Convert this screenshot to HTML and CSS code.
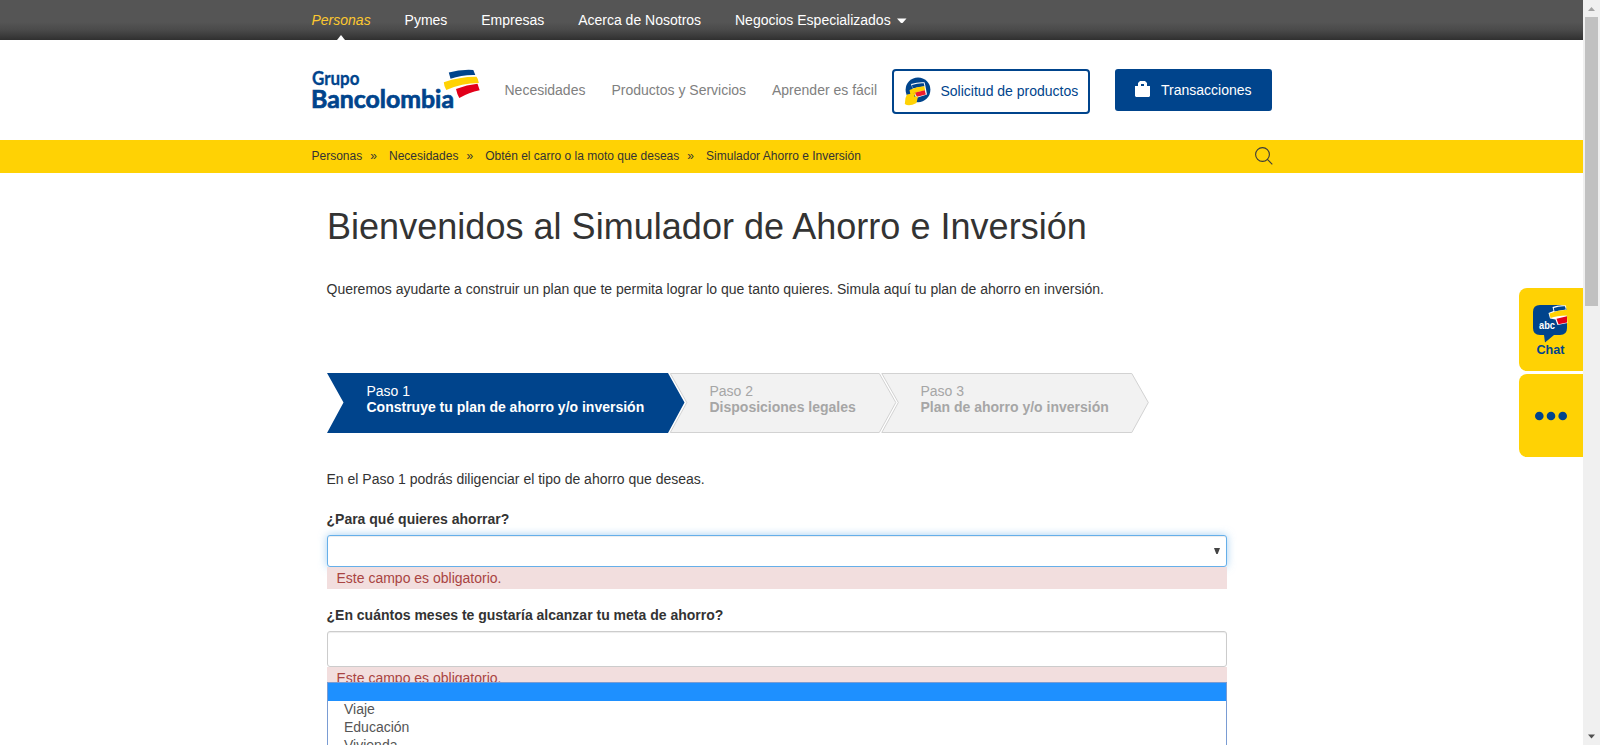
FILE: index.html
```html
<!DOCTYPE html>
<html lang="es">
<head>
<meta charset="utf-8">
<title>Simulador Ahorro e Inversión</title>
<link rel="stylesheet" href="styles.css">
</head>
<body>
<div class="viewport">
<div class="page">
  <nav class="topbar">
    <a class="current">Personas</a><a>Pymes</a><a>Empresas</a><a>Acerca de Nosotros</a><a>Negocios Especializados<svg class="caret" width="10" height="6" viewBox="0 0 10 6"><path d="M0 0.5H9.5L5.8 4.7Q4.8 5.5 3.8 4.7Z" fill="#fff"/></svg></a>
  </nav>
  <header class="header">
    <svg class="logo" width="168" height="48" viewBox="0 0 168 48">
      <text x="0" y="15.500" class="logo-small" textLength="47.500" lengthAdjust="spacingAndGlyphs">Grupo</text>
      <text x="-1" y="39" class="logo-big" textLength="143" lengthAdjust="spacingAndGlyphs">Bancolombia</text>
      <path d="M136.800 3.500Q148 .3 161.300 1L163.300 6Q150 5.600 138.500 9.800Z" fill="#00448c"/>
      <path d="M131.800 13.200Q148 7.500 164.500 7.700Q166.500 10 166.800 14Q150 14 134.300 21Q132 17.500 131.800 13.200Z" fill="#ffd204"/>
      <path d="M144 20Q155 15.800 165.500 14.800L167.700 21.300Q157 23.500 147.300 29Q145 25 144 20Z" fill="#e2001a"/>
    </svg>
    <a class="link necesidades">Necesidades</a>
    <a class="link productos">Productos y Servicios</a>
    <a class="link aprender">Aprender es fácil</a>
    <a class="request">
      <svg width="27" height="29" viewBox="0 0 27 29"><circle cx="14" cy="12.800" r="12.400" fill="#00448c"/><path d="M7 7Q14 4.800 20.500 5.300L21.300 8.500L23 17.500L12 21Z" fill="#fff"/><path d="M8 7.900Q14 5.900 19.800 6.300L20.500 9.200L8.500 11.500Z" fill="#00448c"/><path d="M5.500 13Q13 9.500 20.300 9.200L21.200 13.500Q12 14.500 6.500 18Z" fill="#ffd204"/><path d="M10.500 15.800L20.800 13.200L21.800 17.400L13 19.800Z" fill="#ed1c2e"/><path d="M3 17.500L12 15.800L10 19.500L14 19.500L12.500 26Q5 30 .8 27L1.500 21Z" fill="#ffd204"/></svg>
      <span>Solicitud de productos</span>
    </a>
    <a class="transactions">
      <svg width="15" height="16" viewBox="0 0 15 16"><path d="M0 5H3V2L5 0H10L12 2V5H15V15L14 16H1L0 15Z" fill="#fff"/><path d="M6 3H9V5H6Z" fill="#00448c"/></svg>
      <span>Transacciones</span>
    </a>
  </header>
  <div class="crumbs">
    <a>Personas</a><i>»</i><a>Necesidades</a><i>»</i><a>Obtén el carro o la moto que deseas</a><i>»</i><a>Simulador Ahorro e Inversión</a>
    <svg class="search" width="18" height="18" viewBox="0 0 18 18" fill="none" stroke="#3b3b3b" stroke-width="1.100"><circle cx="7.500" cy="7.500" r="6.900"/><path d="M12.400 12.400L17.300 17.300"/></svg>
  </div>
  <main class="main">
    <h1>Bienvenidos al Simulador de Ahorro e Inversión</h1>
    <p class="intro">Queremos ayudarte a construir un plan que te permita lograr lo que tanto quieres. Simula aquí tu plan de ahorro en inversión.</p>
    <div class="steps">
      <div class="step step-one"><svg class="shape" width="358" height="60"><path d="M0 0H341L357.500 29.500L341 60H0L16.500 29.500Z" fill="#00448c"/></svg><span>Paso 1</span><b>Construye tu plan de ahorro y/o inversión</b></div>
      <div class="step step-two"><svg class="shape" width="228" height="60"><path d="M.3 .5H209.300L225.800 29.500L209.300 59.500H.3L16.800 29.500Z" fill="#f2f2f2" stroke="#d2d2d2"/></svg><span>Paso 2</span><b>Disposiciones legales</b></div>
      <div class="step step-three"><svg class="shape" width="269" height="60"><path d="M.8 .5H250.800L267.300 29.500L250.800 59.500H.8L17.300 29.500Z" fill="#f2f2f2" stroke="#d2d2d2"/></svg><span>Paso 3</span><b>Plan de ahorro y/o inversión</b></div>
    </div>
    <p class="note">En el Paso 1 podrás diligenciar el tipo de ahorro que deseas.</p>
    <div class="label">¿Para qué quieres ahorrar?</div>
    <div class="field select"><svg width="6" height="6" viewBox="0 0 6 6"><path d="M0 0H6L3.700 6H2.300Z" fill="#444"/></svg></div>
    <div class="error">Este campo es obligatorio.</div>
    <div class="label second">¿En cuántos meses te gustaría alcanzar tu meta de ahorro?</div>
    <div class="field input"></div>
    <div class="error lower">Este campo es obligatorio.</div>
    <div class="options"><div class="option active"></div><div class="option">Viaje</div><div class="option">Educación</div><div class="option">Vivienda</div></div>
  </main>
  <aside class="side">
    <div class="tab">
      <svg width="64" height="83" viewBox="0 0 64 83">
        <path d="M21 17H41Q48 17 48 24V40Q48 47 41 47H35L26 54.500L25 47H21Q14 47 14 40V24Q14 17 21 17Z" fill="#00448c"/>
        <path d="M33.500 19Q40 16.500 47 17.500L48.500 35L38.500 37L36.500 31.500L31 30.500L29.500 25L34.500 23Z" fill="#fff"/>
        <path d="M34.800 20Q40 18 46 18.300L46.800 21.500L35.500 23.500Z" fill="#00448c"/>
        <path d="M30.500 25.500Q39 22 48 21.700V27.500Q38 27.500 31.500 30Z" fill="#ffd204"/>
        <path d="M37.500 30.700L48 28.300V34.500L39.500 36.300Z" fill="#e2001a"/>
        <text class="abc" x="20" y="41" textLength="16" lengthAdjust="spacingAndGlyphs">abc</text>
        <text class="chat" x="17.500" y="66" textLength="28" lengthAdjust="spacingAndGlyphs">Chat</text>
      </svg>
    </div>
    <div class="tab"><svg width="64" height="83" viewBox="0 0 64 83" fill="#00448c"><circle cx="20.300" cy="42" r="4.300"/><circle cx="32" cy="42" r="4.300"/><circle cx="43.700" cy="42" r="4.300"/></svg></div>
  </aside>
</div>
<div class="scrollbar">
  <svg width="17" height="17" viewBox="0 0 17 17"><path d="M5 11L8.500 7L12 11Z" fill="#a3a3a3"/></svg>
  <div class="thumb"></div>
  <svg class="down" width="17" height="17" viewBox="0 0 17 17"><path d="M5 6.500H12L8.500 10.500Z" fill="#505050"/></svg>
</div>
</div>
</body>
</html>
```
FILE: styles.css
```css
* { box-sizing: border-box; }
body { margin: 0; font: 14px/20px "Liberation Sans", Arial, sans-serif; color: #333; background: #fff; }
.viewport { display: flex; width: 1600px; height: 745px; overflow: hidden; }
.page { position: relative; width: 1583px; height: 745px; overflow: hidden; }
svg { display: block; flex: none; overflow: visible; }
.topbar { display: flex; gap: 33.900px; height: 40px; padding-left: 311.500px; line-height: 40px; color: #fff; background: linear-gradient(#555 0, #555 55%, #4a4a4a 75%, #303030 100%); white-space: nowrap; }
.topbar a { display: flex; align-items: center; }
.topbar .current { position: relative; color: #fdc82f; font-style: italic; }
.topbar .current::after { content: ""; position: absolute; left: 25px; bottom: 0; border: 4.500px solid transparent; border-top: 0; border-bottom: 5px solid #fff; }
.caret { margin-left: 6px; margin-top: 2px; }
.header { display: flex; height: 100px; padding-left: 312px; white-space: nowrap; }
.logo { margin-top: 29px; }
.logo text { font-family: Lato, "Open Sans", sans-serif; fill: #00448c; stroke: #00448c; }
.logo .logo-small { font-size: 18px; font-weight: 700; stroke-width: .3px; }
.logo .logo-big { font-size: 25px; font-weight: 700; stroke-width: .7px; }
.link { margin-top: 40px; color: #808080; }
.necesidades { width: 107px; margin-left: 24.500px; }
.productos { width: 160.500px; }
.aprender { width: 120px; }
.request { display: flex; align-items: center; width: 198px; height: 45px; margin-top: 29px; padding-left: 9.500px; border: 2px solid #00448c; border-radius: 4px; color: #00448c; }
.request span { margin: -2px 0 0 10px; }
.transactions { display: flex; align-items: center; width: 157px; height: 42px; margin: 29px 0 0 25px; padding-left: 20px; border-radius: 3px; background: #00448c; color: #fff; }
.transactions svg { margin-top: -2px; }
.transactions span { margin-left: 11px; }
.crumbs { display: flex; height: 33px; padding-left: 311.500px; background: #ffd204; font-size: 12px; line-height: 32px; white-space: nowrap; }
.crumbs i { width: 26.800px; padding-left: 8px; font-style: normal; }
.search { margin: 7px 310.500px 0 auto; }
.main { width: 900px; margin-left: 327px; padding-top: 33px; }
h1 { margin: 0; font-size: 36px; line-height: 41px; height: 40px; font-weight: 400; letter-spacing: .03px; white-space: nowrap; }
p { margin: 0; white-space: nowrap; }
.intro, .note, .label { margin-left: -.5px; }
.intro { margin-top: 33px; height: 94px; }
.steps { display: flex; height: 60px; }
.step { position: relative; display: flex; flex-direction: column; height: 60px; padding-top: 10px; line-height: 16px; white-space: nowrap; color: #a6a6a6; }
.step .shape { position: absolute; left: 0; top: 0; }
.step span, .step b { position: relative; }
.step-one { width: 343px; padding-left: 39.500px; color: #fff; }
.step-two { width: 211px; padding-left: 39.500px; }
.step-three { width: 269px; padding-left: 39.500px; }
.note { margin-top: 36px; }
.label { margin-top: 20px; height: 26px; font-weight: 700; }
.field { border: 1px solid #ccc; border-radius: 3px; background: #fff; box-shadow: inset 0 1px 1px rgba(0,0,0,.075); }
.select { display: flex; align-items: center; justify-content: flex-end; height: 32px; padding-right: 6px; border-color: #66afe9; box-shadow: inset 0 1px 1px rgba(0,0,0,.075), 0 0 8px rgba(102,175,233,.6); }
.error { position: relative; height: 22px; padding: 1px 9.500px; background: #f2dede; color: #a94442; }
.label.second { margin-top: 16px; }
.input { height: 36px; }
.error.lower { height: 15px; overflow: hidden; }
.options { height: 90px; border: 1px solid #7a9cd3; color: #555; background: #fff; }
.option { height: 18px; padding-left: 16px; line-height: 16px; }
.option.active { background: #1e90ff; }
.side { position: absolute; right: 0; top: 288px; display: grid; gap: 3px; }
.tab { width: 64px; height: 83px; border-radius: 8px 0 0 8px; background: #ffd204; }
.abc { font: 700 11px "Liberation Sans", Arial, sans-serif; fill: #fff; }
.chat { font: 700 13.500px "Liberation Sans", Arial, sans-serif; fill: #00448c; }
.scrollbar { display: flex; flex-direction: column; width: 17px; background: #f0f0f0; }
.thumb { width: 13px; height: 289px; margin-left: 2px; background: #c1c1c1; }
.down { margin-top: auto; }
```
